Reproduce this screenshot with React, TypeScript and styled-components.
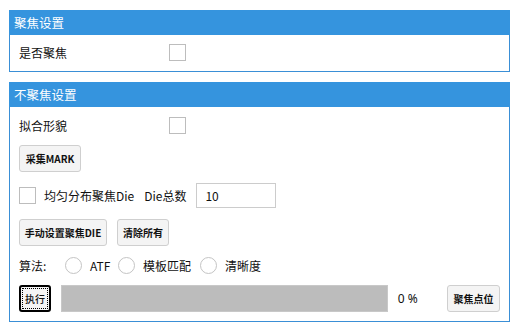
import React from "react";
import styled, { createGlobalStyle } from "styled-components";

const Global = createGlobalStyle`
  html, body { margin: 0; padding: 0; background: #ffffff; }
  body { font-family: "Noto Sans CJK SC", "Noto Sans", sans-serif; color: #111; }
`;

const Page = styled.div`
  width: 519px;
  height: 334px;
  box-sizing: border-box;
  padding: 10px 9px 0 9px;
  display: flex;
  flex-direction: column;
  gap: 10px;
`;

const Panel = styled.section`
  width: 501px;
  box-sizing: border-box;
  border: 1px solid #3a8fd6;
  border-top: none;
  display: flex;
  flex-direction: column;
`;

const PanelHeader = styled.div`
  height: 25px;
  margin: 0 -1px;
  background: #3594de;
  color: #ffffff;
  font-size: 12.5px;
  line-height: 25px;
  padding-left: 5px;
`;

const PanelBody = styled.div<{ $pt: number; $pb: number }>`
  display: flex;
  flex-direction: column;
  gap: 11px;
  padding: ${(p) => p.$pt}px 9px ${(p) => p.$pb}px 9px;
`;

const Row = styled.div<{ $h: number; $gap?: number }>`
  display: flex;
  align-items: center;
  height: ${(p) => p.$h}px;
  gap: ${(p) => p.$gap ?? 0}px;
`;

const Label = styled.span<{ $w?: number }>`
  font-size: 12px;
  white-space: nowrap;
  ${(p) => (p.$w ? `width: ${p.$w}px;` : "")}
`;

const Check = styled.span`
  width: 17px;
  height: 17px;
  box-sizing: border-box;
  border: 1px solid #bdbdbd;
  background: #fff;
  flex: none;
`;

const Radio = styled.span`
  width: 17px;
  height: 17px;
  box-sizing: border-box;
  border: 1px solid #c4c4c4;
  border-radius: 50%;
  background: #fff;
  flex: none;
`;

const Button = styled.button<{ $w: number; $focus?: boolean }>`
  width: ${(p) => p.$w}px;
  height: 27px;
  box-sizing: border-box;
  font-family: "Noto Sans CJK SC", "Noto Sans", sans-serif;
  font-size: 10px;
  font-weight: 700;
  color: #111;
  background: #f4f4f4;
  border: 1px solid #cfcfcf;
  border-radius: 3px;
  padding: 0;
  flex: none;
  ${(p) =>
    p.$focus
      ? `border: 2px solid #000; outline: 1px dotted #000; outline-offset: -4px; border-radius: 3px; font-weight: 500;`
      : ""}
`;

const Input = styled.div`
  width: 80px;
  height: 25px;
  box-sizing: border-box;
  border: 1px solid #cccccc;
  font-size: 12px;
  line-height: 23px;
  padding-left: 8px;
`;

const Progress = styled.div`
  width: 327px;
  height: 27px;
  box-sizing: border-box;
  background: #bcbcbc;
  border: 1px solid #c8c8c8;
  flex: none;
`;

const Percent = styled.span`
  font-family: "Noto Sans", sans-serif;
  font-size: 12px;
  width: 50px;
  padding-left: 10px;
`;

const RadioItem = styled.span`
  display: flex;
  align-items: center;
  gap: 8px;
  font-size: 12px;
`;

export default function App() {
  return (
    <>
      <Global />
      <Page>
        <Panel>
          <PanelHeader>聚焦设置</PanelHeader>
          <PanelBody $pt={9} $pb={10}>
            <Row $h={17}>
              <Label $w={150}>是否聚焦</Label>
              <Check />
            </Row>
          </PanelBody>
        </Panel>
        <Panel>
          <PanelHeader>不聚焦设置</PanelHeader>
          <PanelBody $pt={10} $pb={9}>
            <Row $h={17}>
              <Label $w={150}>拟合形貌</Label>
              <Check />
            </Row>
            <Row $h={27}>
              <Button $w={62}>采集MARK</Button>
            </Row>
            <Row $h={25}>
              <Check />
              <Label style={{ marginLeft: 8 }}>均匀分布聚焦Die</Label>
              <Label style={{ marginLeft: 10 }}>Die总数</Label>
              <span style={{ marginLeft: 10 }}>
                <Input>10</Input>
              </span>
            </Row>
            <Row $h={27} $gap={10}>
              <Button $w={88}>手动设置聚焦DIE</Button>
              <Button $w={52}>清除所有</Button>
            </Row>
            <Row $h={17}>
              <Label $w={46}>算法:</Label>
              <RadioItem style={{ width: 53 }}>
                <Radio />
                ATF
              </RadioItem>
              <RadioItem style={{ width: 82 }}>
                <Radio />
                模板匹配
              </RadioItem>
              <RadioItem>
                <Radio />
                清晰度
              </RadioItem>
            </Row>
            <Row $h={27}>
              <Button $w={32} $focus>
                执行
              </Button>
              <span style={{ width: 10 }} />
              <Progress />
              <Percent>0 %</Percent>
              <Button $w={53}>聚焦点位</Button>
            </Row>
          </PanelBody>
        </Panel>
      </Page>
    </>
  );
}
